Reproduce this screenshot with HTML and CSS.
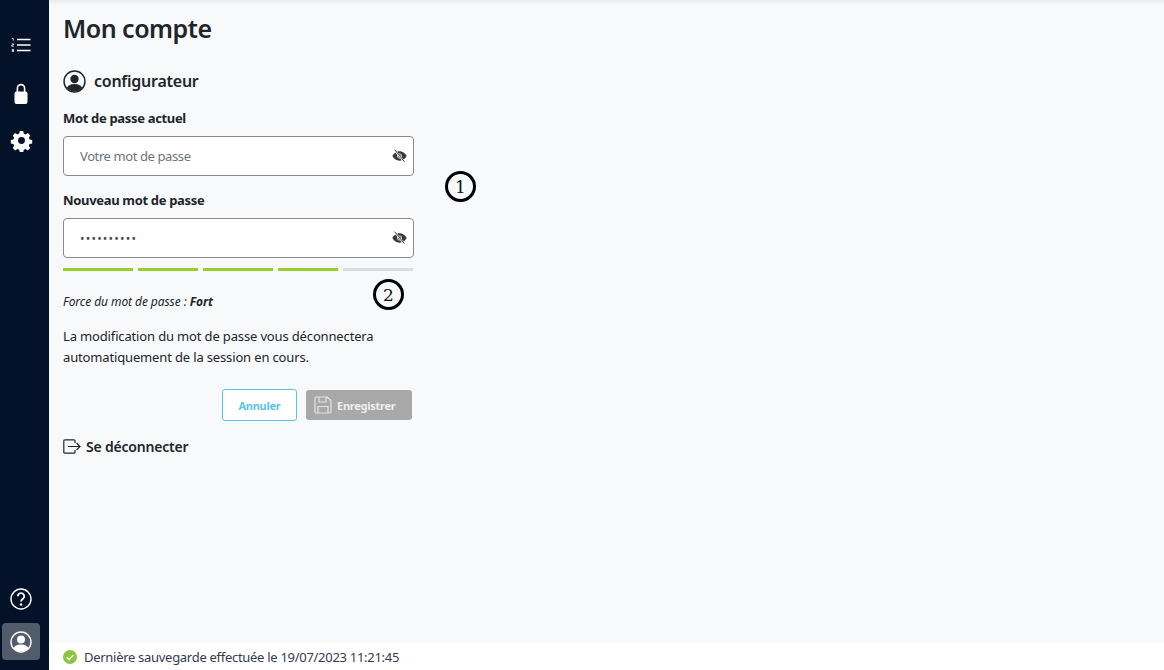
FILE: index.html
```html
<!DOCTYPE html>
<html lang="fr">
<head>
<meta charset="utf-8">
<title>Mon compte</title>
<link rel="stylesheet" href="styles.css">
</head>
<body>
<div class="app">
  <nav class="sidebar">
    <div class="nav-top">
      <svg class="nav-icon list" viewBox="0 0 20 14"><path fill="none" stroke="#fff" stroke-width="1.3" d="M6 1.500h13.500M6 7h13.500M6 12.500h13.500"/><path fill="none" stroke="#fff" stroke-width=".8" d="M.8.400h1.400v2.200M.8 5.900h1.800v1.100H.8v1.200h1.800M.8 11.400h1.800v2.200H.8M.8 12.500h1.800"/></svg>
      <svg class="nav-icon lock" viewBox="0 0 14 21"><path d="M3.400 10V5.200a3.600 3.600 0 0 1 7.200 0V10" fill="none" stroke="#fff" stroke-width="1.600"/><rect x=".5" y="8.500" width="13" height="12.500" rx="2" fill="#fff"/></svg>
      <svg class="nav-icon gear" viewBox="0 0 24 24"><path fill="#fff" fill-rule="evenodd" d="M10 1h4l.6 3 2.100.9 2.600-1.700 2.900 2.900-1.700 2.600.9 2.100 3 .6v4l-3 .6-.9 2.100 1.700 2.600-2.900 2.900-2.600-1.700-2.100.9-.6 3h-4l-.6-3-2.100-.9-2.600 1.700-2.900-2.900 1.700-2.600-.9-2.100-3-.6v-4l3-.6.9-2.100-1.700-2.600 2.900-2.900 2.600 1.700 2.100-.9zM12 8a4 4 0 1 0 0 8 4 4 0 0 0 0-8z" transform="translate(1.200 1.200) scale(.9)"/></svg>
    </div>
    <div class="nav-bottom">
      <svg class="nav-icon help" viewBox="0 0 22 22"><circle cx="11" cy="11" r="10" fill="none" stroke="#fff" stroke-width="1.400"/><path d="M7.800 8.300a3.200 3.200 0 1 1 4.800 2.800c-1 .6-1.600 1.100-1.600 2.400" fill="none" stroke="#fff" stroke-width="1.800"/><circle cx="11" cy="16.400" r="1.200" fill="#fff"/></svg>
      <div class="nav-active">
        <svg class="nav-icon user" viewBox="0 0 22 22"><defs><clipPath id="uc"><circle cx="11" cy="11" r="9.600"/></clipPath></defs><circle cx="11" cy="11" r="10" fill="none" stroke="#fff" stroke-width="1.400"/><circle cx="11" cy="8.600" r="4" fill="#fff"/><ellipse cx="11" cy="18" rx="7.500" ry="4.600" fill="#fff" clip-path="url(#uc)"/></svg>
      </div>
    </div>
  </nav>
  <div class="main">
    <main class="content">
      <h1 class="title">Mon compte</h1>
      <div class="user-row">
        <svg class="user-icon" viewBox="0 0 22 22"><defs><clipPath id="ud"><circle cx="11" cy="11" r="9.600"/></clipPath></defs><circle cx="11" cy="11" r="10" fill="none" stroke="#212529" stroke-width="1.400"/><circle cx="11" cy="8.600" r="4" fill="#212529"/><ellipse cx="11" cy="18" rx="7.500" ry="4.600" fill="#212529" clip-path="url(#ud)"/></svg>
        <span>configurateur</span>
      </div>
      <form class="form">
        <label class="label">Mot de passe actuel</label>
        <div class="input placeholder">Votre mot de passe
          <svg class="eye" viewBox="0 0 16 14"><path fill="#343a40" d="M8 2C4.400 2 1.600 4.600.4 7c1.200 2.400 4 5 7.600 5s6.400-2.600 7.600-5C14.400 4.600 11.600 2 8 2z"/><circle cx="8" cy="7" r="2.300" fill="none" stroke="#f8f9fb" stroke-width=".8"/><path d="M2.800.8l10.400 12.400" stroke="#f8f9fb" stroke-width="2"/><path d="M2.800.2l10.400 12.800" stroke="#343a40" stroke-width="1"/></svg>
        </div>
        <label class="label second">Nouveau mot de passe</label>
        <div class="input filled">••••••••••
          <svg class="eye" viewBox="0 0 16 14"><path fill="#343a40" d="M8 2C4.400 2 1.600 4.600.4 7c1.200 2.400 4 5 7.600 5s6.400-2.600 7.600-5C14.400 4.600 11.600 2 8 2z"/><circle cx="8" cy="7" r="2.300" fill="none" stroke="#f8f9fb" stroke-width=".8"/><path d="M2.800.8l10.400 12.400" stroke="#f8f9fb" stroke-width="2"/><path d="M2.800.2l10.400 12.800" stroke="#343a40" stroke-width="1"/></svg>
        </div>
        <div class="strength">
          <span class="seg on s70"></span>
          <span class="seg on s60"></span>
          <span class="seg on s70"></span>
          <span class="seg on s60"></span>
          <span class="seg s70"></span>
        </div>
        <p class="force">Force du mot de passe : <b>Fort</b></p>
        <p class="note">La modification du mot de passe vous déconnectera automatiquement de la session en cours.</p>
        <div class="actions">
          <button type="button" class="btn cancel">Annuler</button>
          <button type="button" class="btn save">
            <svg class="save-icon" viewBox="0 0 18 18"><g fill="none" stroke="#e4e4e4" stroke-width="1.200"><path d="M1 2.200A1.200 1.200 0 0 1 2.200 1h11L17 4.800v11a1.200 1.200 0 0 1-1.200 1.200H2.200A1.200 1.200 0 0 1 1 15.800z"/><path d="M5 1v5h7V1M4 17v-6.500h10V17"/></g></svg>
            Enregistrer
          </button>
        </div>
      </form>
      <a class="logout">
        <svg class="logout-icon" viewBox="0 0 18 15"><g fill="none" stroke="#212529" stroke-width="1.200"><path d="M12 4V1.800A1 1 0 0 0 11 .8H1.800A1 1 0 0 0 .8 1.800v11.400a1 1 0 0 0 1 1H11a1 1 0 0 0 1-1V11"/><path d="M5 7.500h12M13.500 4l3.500 3.500-3.500 3.500"/></g></svg>
        <span>Se déconnecter</span>
      </a>
      <span class="marker m1">1</span>
      <span class="marker m2">2</span>
    </main>
    <footer class="footer">
      <svg class="ok" viewBox="0 0 14 14"><circle cx="7" cy="7" r="7" fill="#8cc63f"/><path d="M3.800 7.200l2.300 2.300 4.200-4.400" fill="none" stroke="#fff" stroke-width="1.300"/></svg>
      <span>Dernière sauvegarde effectuée le 19/07/2023 11:21:45</span>
    </footer>
  </div>
</div>
</body>
</html>
```

FILE: styles.css
```css
* { box-sizing: border-box; }
html, body { margin: 0; height: 100%; }
body {
  font-family: "Noto Sans", "Open Sans", sans-serif;
  color: #212529;
  background: #f8f9fb;
  overflow: hidden;
}
.app { display: flex; height: 670px; }
.sidebar {
  width: 49px;
  flex: none;
  background: #031228;
  display: flex;
  flex-direction: column;
  justify-content: space-between;
  align-items: center;
  padding: 38px 7px 10px 0;
}
.nav-top, .nav-bottom { display: flex; flex-direction: column; align-items: center; }
.nav-icon { display: block; }
.list { width: 20px; height: 14px; }
.lock { width: 14px; height: 21px; margin-top: 31px; }
.gear { width: 23px; height: 23px; margin-top: 25px; }
.help { width: 22px; height: 22px; }
.nav-active {
  width: 38px; height: 37px; margin-top: 13px;
  background: #525b69; border-radius: 4px;
  display: flex; align-items: center; justify-content: center;
}
.user { width: 22px; height: 22px; }
.main { flex: 1; display: flex; flex-direction: column; min-width: 0; }
.content {
  position: relative;
  flex: 1;
  padding: 11px 14px 0;
  box-shadow: inset 0 6px 6px -6px rgba(0,0,0,.12);
}
.title { margin: 0; font-size: 25px; line-height: 34px; font-weight: 600; letter-spacing: -.5px; }
.user-row {
  display: flex; align-items: center; gap: 8px;
  margin-top: 24px; height: 24px;
  font-size: 16px; font-weight: 600; letter-spacing: -.25px;
}
.user-icon { width: 23px; height: 23px; }
.form { width: 351px; }
.label { display: block; font-size: 13px; font-weight: 700; line-height: 18px; margin-top: 16px; letter-spacing: -.33px; }
.label.second { margin-top: 15px; }
.input {
  position: relative;
  height: 40px; margin-top: 9px;
  background: #fff;
  border: 1px solid #8a8a8a; border-radius: 4px;
  padding: 0 16px;
  display: flex; align-items: center;
  font-size: 13px;
}
.placeholder { color: #6c757d; letter-spacing: -.4px; }
.filled { color: #495057; font-size: 12px; letter-spacing: 1.2px; }
.eye { position: absolute; right: 6px; top: 12px; width: 15px; height: 14px; }
.strength { display: flex; gap: 5px; margin-top: 10px; }
.seg { display: block; height: 3px; background: #dcdcdc; }
.seg.on { background: #98cf2a; }
.s70 { width: 70px; }
.s60 { width: 60px; }
.force { margin: 23px 0 0; font-size: 12px; line-height: 16px; font-style: italic; letter-spacing: -.07px; }
.note { margin: 16px 0 0; font-size: 13px; line-height: 21px; letter-spacing: -.15px; }
.actions { display: flex; justify-content: flex-end; gap: 9px; margin-top: 21px; padding-right: 2px; align-items: center; }
.btn {
  font-family: inherit; font-size: 11px; font-weight: 700;
  border-radius: 3px; height: 30px; display: flex; align-items: center; justify-content: center;
}
.cancel { width: 75px; height: 32px; background: #fff; border: 1px solid #5bc4e6; color: #5bc4e6; letter-spacing: -.25px; }
.save { width: 106px; background: #a8a8a8; border: 0; color: #eee; gap: 5px; letter-spacing: -.25px; justify-content: flex-start; padding: 0 0 0 8px; }
.save-icon { width: 18px; height: 18px; }
.logout { display: flex; align-items: center; gap: 5px; margin-top: 15px; height: 20px; font-size: 14px; font-weight: 600; letter-spacing: -.2px; }
.logout-icon { width: 18px; height: 15px; }
.marker {
  position: absolute;
  width: 31px; height: 31px;
  border: 3px solid #000; border-radius: 50%;
  background: #f8f9fb;
  display: flex; align-items: center; justify-content: center;
  font-family: "DejaVu Serif", serif; font-size: 17px; color: #111;
}
.m1 { left: 396px; top: 171px; }
.m2 { left: 324px; top: 279px; }
.footer {
  height: 27px; flex: none; background: #fff;
  display: flex; align-items: center; gap: 7px;
  padding-left: 14px; font-size: 13px; color: #343a50; letter-spacing: -.29px;
}
.ok { width: 14px; height: 14px; }
```
